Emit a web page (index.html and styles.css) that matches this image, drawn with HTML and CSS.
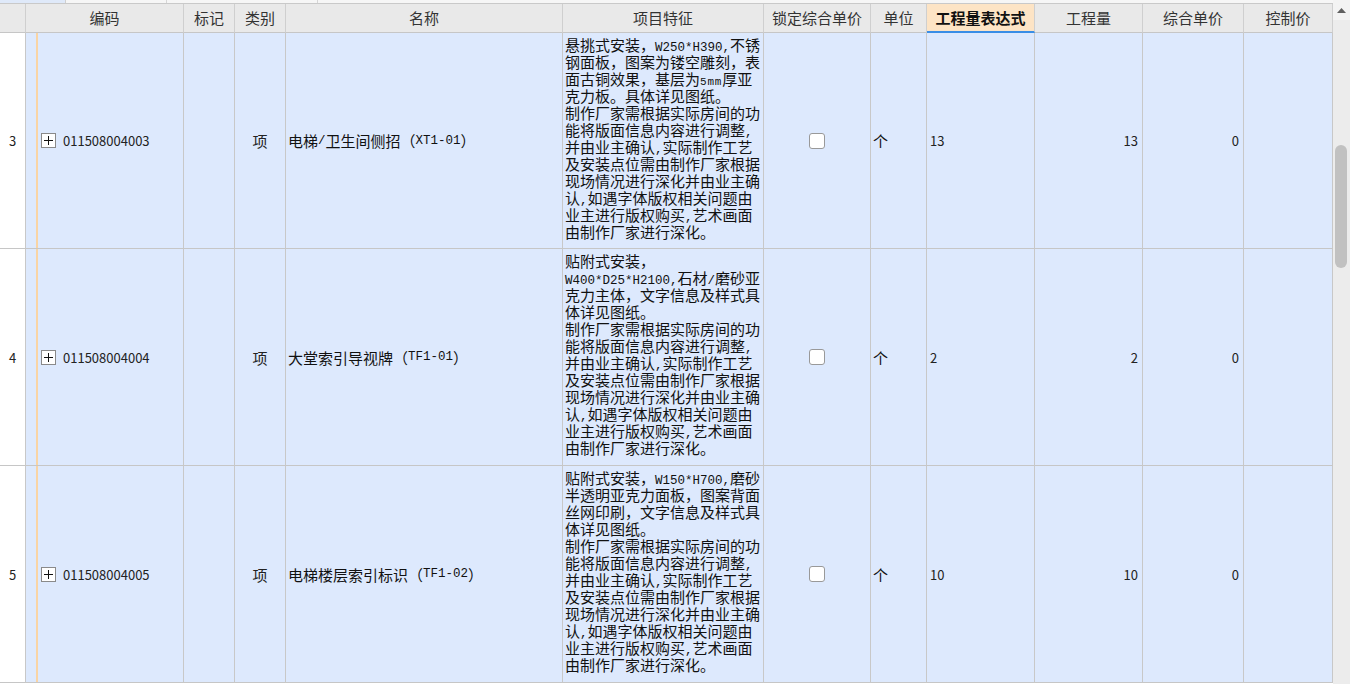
FILE: index.html
```html
<!DOCTYPE html>
<html lang="zh-CN">
<head>
<meta charset="utf-8">
<title>清单</title>
<link rel="stylesheet" href="styles.css">
</head>
<body>
<div class="screen">
  <div class="table">
    <div class="strip"><span class="strip-a"></span><span class="strip-b"></span><span class="strip-c"></span></div>
    <div class="row head">
      <div class="hc"></div>
      <div class="hc">编码</div>
      <div class="hc">标记</div>
      <div class="hc">类别</div>
      <div class="hc">名称</div>
      <div class="hc">项目特征</div>
      <div class="hc">锁定综合单价</div>
      <div class="hc">单位</div>
      <div class="hc active">工程量表达式</div>
      <div class="hc">工程量</div>
      <div class="hc">综合单价</div>
      <div class="hc">控制价</div>
    </div>

    <div class="row body">
      <div class="c num">3</div>
      <div class="c code"><span class="plus"></span><span>011508004003</span></div>
      <div class="c"></div>
      <div class="c center">项</div>
      <div class="c name">电梯<span class="lat">/</span>卫生间侧招（<span class="lat">XT1-01</span>）</div>
      <div class="c feat">
        <div class="ln">悬挑式安装，<span class="lat">W250*H390,</span>不锈</div>
        <div class="ln">钢面板，图案为镂空雕刻，表</div>
        <div class="ln">面古铜效果，基层为<span class="lat sm">5mm</span>厚亚</div>
        <div class="ln">克力板。具体详见图纸。</div>
        <div class="ln">制作厂家需根据实际房间的功</div>
        <div class="ln">能将版面信息内容进行调整<span class="lat">,</span></div>
        <div class="ln">并由业主确认<span class="lat">,</span>实际制作工艺</div>
        <div class="ln">及安装点位需由制作厂家根据</div>
        <div class="ln">现场情况进行深化并由业主确</div>
        <div class="ln">认<span class="lat">,</span>如遇字体版权相关问题由</div>
        <div class="ln">业主进行版权购买<span class="lat">,</span>艺术画面</div>
        <div class="ln">由制作厂家进行深化。</div>
      </div>
      <div class="c center"><span class="check"></span></div>
      <div class="c unit">个</div>
      <div class="c expr">13</div>
      <div class="c right">13</div>
      <div class="c right">0</div>
      <div class="c"></div>
    </div>

    <div class="row body">
      <div class="c num">4</div>
      <div class="c code"><span class="plus"></span><span>011508004004</span></div>
      <div class="c"></div>
      <div class="c center">项</div>
      <div class="c name">大堂索引导视牌（<span class="lat">TF1-01</span>）</div>
      <div class="c feat">
        <div class="ln">贴附式安装，</div>
        <div class="ln"><span class="lat">W400*D25*H2100,</span>石材<span class="lat">/</span>磨砂亚</div>
        <div class="ln">克力主体，文字信息及样式具</div>
        <div class="ln">体详见图纸。</div>
        <div class="ln">制作厂家需根据实际房间的功</div>
        <div class="ln">能将版面信息内容进行调整<span class="lat">,</span></div>
        <div class="ln">并由业主确认<span class="lat">,</span>实际制作工艺</div>
        <div class="ln">及安装点位需由制作厂家根据</div>
        <div class="ln">现场情况进行深化并由业主确</div>
        <div class="ln">认<span class="lat">,</span>如遇字体版权相关问题由</div>
        <div class="ln">业主进行版权购买<span class="lat">,</span>艺术画面</div>
        <div class="ln">由制作厂家进行深化。</div>
      </div>
      <div class="c center"><span class="check"></span></div>
      <div class="c unit">个</div>
      <div class="c expr">2</div>
      <div class="c right">2</div>
      <div class="c right">0</div>
      <div class="c"></div>
    </div>

    <div class="row body">
      <div class="c num">5</div>
      <div class="c code"><span class="plus"></span><span>011508004005</span></div>
      <div class="c"></div>
      <div class="c center">项</div>
      <div class="c name">电梯楼层索引标识（<span class="lat">TF1-02</span>）</div>
      <div class="c feat">
        <div class="ln">贴附式安装，<span class="lat">W150*H700,</span>磨砂</div>
        <div class="ln">半透明亚克力面板，图案背面</div>
        <div class="ln">丝网印刷，文字信息及样式具</div>
        <div class="ln">体详见图纸。</div>
        <div class="ln">制作厂家需根据实际房间的功</div>
        <div class="ln">能将版面信息内容进行调整<span class="lat">,</span></div>
        <div class="ln">并由业主确认<span class="lat">,</span>实际制作工艺</div>
        <div class="ln">及安装点位需由制作厂家根据</div>
        <div class="ln">现场情况进行深化并由业主确</div>
        <div class="ln">认<span class="lat">,</span>如遇字体版权相关问题由</div>
        <div class="ln">业主进行版权购买<span class="lat">,</span>艺术画面</div>
        <div class="ln">由制作厂家进行深化。</div>
      </div>
      <div class="c center"><span class="check"></span></div>
      <div class="c unit">个</div>
      <div class="c expr">10</div>
      <div class="c right">10</div>
      <div class="c right">0</div>
      <div class="c"></div>
    </div>
  </div>

  <div class="vscroll">
    <div class="arrow"><svg width="17" height="20" viewBox="0 0 17 20"><path d="M4 13 L8.5 8 L13 13 Z" fill="#606060"/></svg></div>
    <div class="track"><div class="thumb"></div></div>
  </div>
</div>
</body>
</html>
```

FILE: styles.css
```css
html, body {
  margin: 0;
  padding: 0;
  background: #ffffff;
  overflow: hidden;
}

.screen {
  width: 1350px;
  height: 684px;
  display: flex;
  overflow: hidden;
  font-family: "Noto Sans CJK SC", "Noto Sans", sans-serif;
  color: #222;
}

.table {
  width: 1333px;
  flex: none;
  display: flex;
  flex-direction: column;
}

.strip {
  height: 3px;
  border-bottom: 1px solid #c9c9c9;
  background: #f6f6f6;
  display: flex;
  flex: none;
}

.strip-a {
  width: 65px;
  background: #dfe9f9;
  border-right: 1px solid #cfcfcf;
}

.strip-b {
  width: 100px;
  border-right: 1px solid #d6d6d6;
}

.strip-c {
  width: 150px;
  border-right: 1px solid #d6d6d6;
}

.row {
  display: grid;
  grid-template-columns: 26px 158px 51px 51px 277px 201px 107px 56px 108px 108px 101px 89px;
  flex: none;
}

.head {
  height: 29px;
  background: #e9e9e9;
}

.hc {
  box-sizing: border-box;
  border-right: 1px solid #cfcfcf;
  border-bottom: 1px solid #c6c6c6;
  display: flex;
  align-items: center;
  justify-content: center;
  font-size: 15px;
  color: #333;
  padding-bottom: 1px;
  white-space: nowrap;
}

.hc.active {
  background: #fde4c5;
  color: #111;
  font-weight: bold;
  border-bottom: 2px solid #3a8ee6;
}

.body {
  height: 217px;
  background: #dde9fd;
}

.body:nth-child(3) {
  height: 216px;
}

.c {
  box-sizing: border-box;
  border-right: 1px solid #c8c8c8;
  border-bottom: 1px solid #c6c6c6;
  display: flex;
  align-items: center;
  font-size: 15px;
  white-space: nowrap;
  overflow: hidden;
}

.num {
  background: #ffffff;
  justify-content: center;
  font-size: 13px;
  color: #222;
}

.code {
  padding-left: 15px;
  font-size: 13px;
  color: #222;
  gap: 7px;
  background: linear-gradient(to right, transparent 10px, #f9d4a4 10px, #f9d4a4 12px, transparent 12px);
}

.plus {
  width: 15px;
  height: 15px;
  box-sizing: border-box;
  border: 1px solid #8a8a8a;
  background: #ffffff;
  position: relative;
  flex: none;
}

.plus::before,
.plus::after {
  content: "";
  position: absolute;
  background: #111;
}

.plus::before {
  left: 2px;
  right: 2px;
  top: 6px;
  height: 1px;
}

.plus::after {
  top: 2px;
  bottom: 2px;
  left: 6px;
  width: 1px;
}

.center {
  justify-content: center;
}

.name {
  padding-left: 2px;
  color: #111;
}

.feat {
  padding: 3px 0 0 2px;
  font-size: 15px;
  color: #111;
  display: flex;
  flex-direction: column;
  align-items: flex-start;
  justify-content: flex-start;
}

.ln {
  height: 17px;
  line-height: 17px;
  overflow: visible;
  white-space: nowrap;
  flex: none;
}

.lat {
  font-family: "Liberation Mono", "DejaVu Sans Mono", monospace;
  font-size: 12.5px;
  line-height: 10px;
}

.lat.sm {
  font-size: 11px;
  letter-spacing: 0.8px;
}

.check {
  width: 16px;
  height: 16px;
  box-sizing: border-box;
  border: 1px solid #999;
  border-radius: 3px;
  background: #ffffff;
}

.unit {
  padding-left: 2px;
  color: #111;
}

.expr {
  padding-left: 3px;
  font-size: 13px;
  color: #222;
}

.right {
  justify-content: flex-end;
  padding-right: 4px;
  font-size: 13px;
  color: #222;
}

.vscroll {
  width: 17px;
  flex: none;
  background: #ececec;
  display: flex;
  flex-direction: column;
}

.arrow {
  height: 20px;
  background: #f3f3f3;
  flex: none;
}

.arrow svg {
  display: block;
}

.track {
  flex: 1;
  padding: 125px 3px 0 2px;
}

.thumb {
  height: 123px;
  background: #c1c1c1;
  border-radius: 6px;
}
```
